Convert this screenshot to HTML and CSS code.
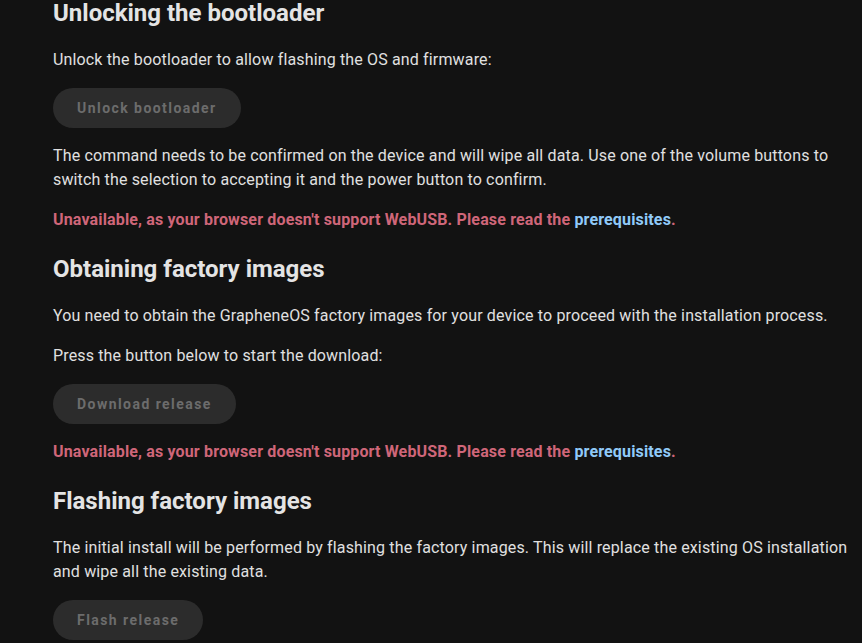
FILE: index.html
```html
<!DOCTYPE html>
<html lang="en">
<head>
<meta charset="utf-8">
<title>GrapheneOS web installer</title>
<link rel="stylesheet" href="styles.css">
</head>
<body>
<main class="content">
  <section class="step">
    <h2 class="step-title first">Unlocking the bootloader</h2>
    <p class="text">Unlock the bootloader to allow flashing the OS and firmware:</p>
    <button class="btn" disabled>Unlock bootloader</button>
    <p class="text">The command needs to be confirmed on the device and will wipe all data. Use one of the volume buttons to switch the selection to accepting it and the power button to confirm.</p>
    <p class="error">Unavailable, as your browser doesn't support WebUSB. Please read the <a class="link" href="#prerequisites">prerequisites</a>.</p>
  </section>
  <section class="step">
    <h2 class="step-title">Obtaining factory images</h2>
    <p class="text">You need to obtain the GrapheneOS factory images for your device to proceed with the installation process.</p>
    <p class="text">Press the button below to start the download:</p>
    <button class="btn" disabled>Download release</button>
    <p class="error">Unavailable, as your browser doesn't support WebUSB. Please read the <a class="link" href="#prerequisites">prerequisites</a>.</p>
  </section>
  <section class="step">
    <h2 class="step-title">Flashing factory images</h2>
    <p class="text">The initial install will be performed by flashing the factory images. This will replace the existing OS installation and wipe all the existing data.</p>
    <button class="btn" disabled>Flash release</button>
  </section>
</main>
</body>
</html>
```

FILE: styles.css
```css
html, body {
  margin: 0;
  padding: 0;
  background: #121212;
}

body {
  font-family: Roboto, "Liberation Sans", sans-serif;
  color: #e0e0e0;
  font-size: 16px;
  line-height: 24px;
  overflow: hidden;
}

.content {
  width: 806px;
  padding: 0 0 0 53px;
}

.step {
  display: flex;
  flex-direction: column;
  align-items: flex-start;
  gap: 16px;
}

.step + .step {
  margin-top: 24px;
}

.step-title {
  margin: 0 0 6px 0;
  font-size: 24px;
  line-height: 26px;
  font-weight: 700;
  color: #e4e4e4;
}

.text,
.error {
  margin: 0;
  letter-spacing: 0.15px;
}

.error {
  color: #cf6679;
  font-weight: 700;
}

.link {
  color: #90caf9;
  text-decoration: none;
}

.btn {
  height: 40px;
  padding: 0 24px;
  border: none;
  border-radius: 20px;
  background: #2c2c2c;
  color: #6c6c6c;
  font-family: Roboto, "Liberation Sans", sans-serif;
  font-size: 14px;
  font-weight: 700;
  letter-spacing: 1.45px;
  cursor: default;
}
```
